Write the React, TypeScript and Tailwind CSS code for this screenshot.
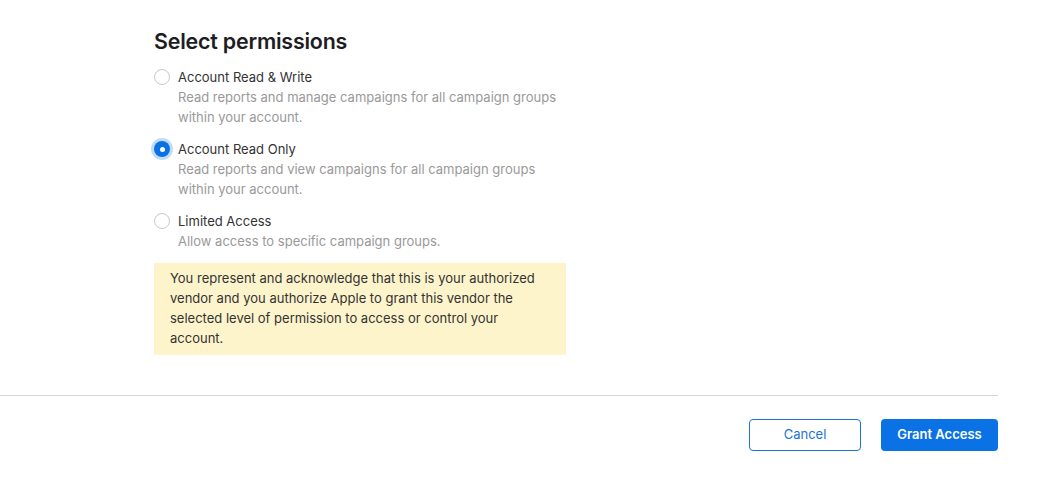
import React, { useState } from 'react';

const options = [
  {
    id: 'rw',
    label: 'Account Read & Write',
    desc: 'Read reports and manage campaigns for all campaign groups within your account.',
  },
  {
    id: 'ro',
    label: 'Account Read Only',
    desc: 'Read reports and view campaigns for all campaign groups within your account.',
  },
  {
    id: 'limited',
    label: 'Limited Access',
    desc: 'Allow access to specific campaign groups.',
  },
];

function Radio({ checked }: { checked: boolean }) {
  if (checked) {
    return (
      <span className="flex h-4 w-4 shrink-0 items-center justify-center rounded-full bg-[#0a72e5] ring-[3px] ring-[#0a72e5]/25">
        <span className="h-[5px] w-[5px] rounded-full bg-white" />
      </span>
    );
  }
  return <span className="block h-4 w-4 shrink-0 rounded-full border border-[#c9c9c9] bg-white" />;
}

export default function App() {
  const [selected, setSelected] = useState('ro');

  return (
    <div
      className="h-[480px] w-[1046px] bg-white text-[#333]"
      style={{ fontFamily: 'Inter, "Liberation Sans", sans-serif' }}
    >
      <div className="pl-[154px] pt-[27px]">
        <h1 className="text-[21.4px] font-semibold leading-[28px] tracking-[-0.2px] text-[#1d1d1f]">
          Select permissions
        </h1>

        <div className="mt-3 flex flex-col gap-3">
          {options.map((o) => (
            <button
              key={o.id}
              onClick={() => setSelected(o.id)}
              className="flex w-[412px] gap-2 text-left"
            >
              <span className="flex h-5 items-center">
                <Radio checked={selected === o.id} />
              </span>
              <span className="flex flex-col">
                <span className="text-[13px] leading-5 text-[#333]">{o.label}</span>
                <span className="w-[388px] text-[13px] leading-5 text-[#999]">{o.desc}</span>
              </span>
            </button>
          ))}
        </div>

        {/* Acknowledgement notice */}
        <div className="mt-3 w-[412px] bg-[#fdf4cb] px-4 pb-[7px] pt-[5px] text-[13px] leading-5 text-[#333]">
          You represent and acknowledge that this is your authorized vendor and you authorize Apple to
          grant this vendor the selected level of permission to access or control your account.
        </div>
      </div>

      <div className="mt-[40px] w-[998px] border-t border-[#d6d6d6]" />

      <div className="flex w-[998px] justify-end gap-5 pt-[23px]">
        <button className="h-8 w-[112px] rounded-[4px] border border-[#1a73d9] text-[13px] text-[#1a73d9]">
          Cancel
        </button>
        <button className="h-8 w-[117px] rounded-[4px] bg-[#0a72e5] text-[13px] font-semibold text-white">
          Grant Access
        </button>
      </div>
    </div>
  );
}
